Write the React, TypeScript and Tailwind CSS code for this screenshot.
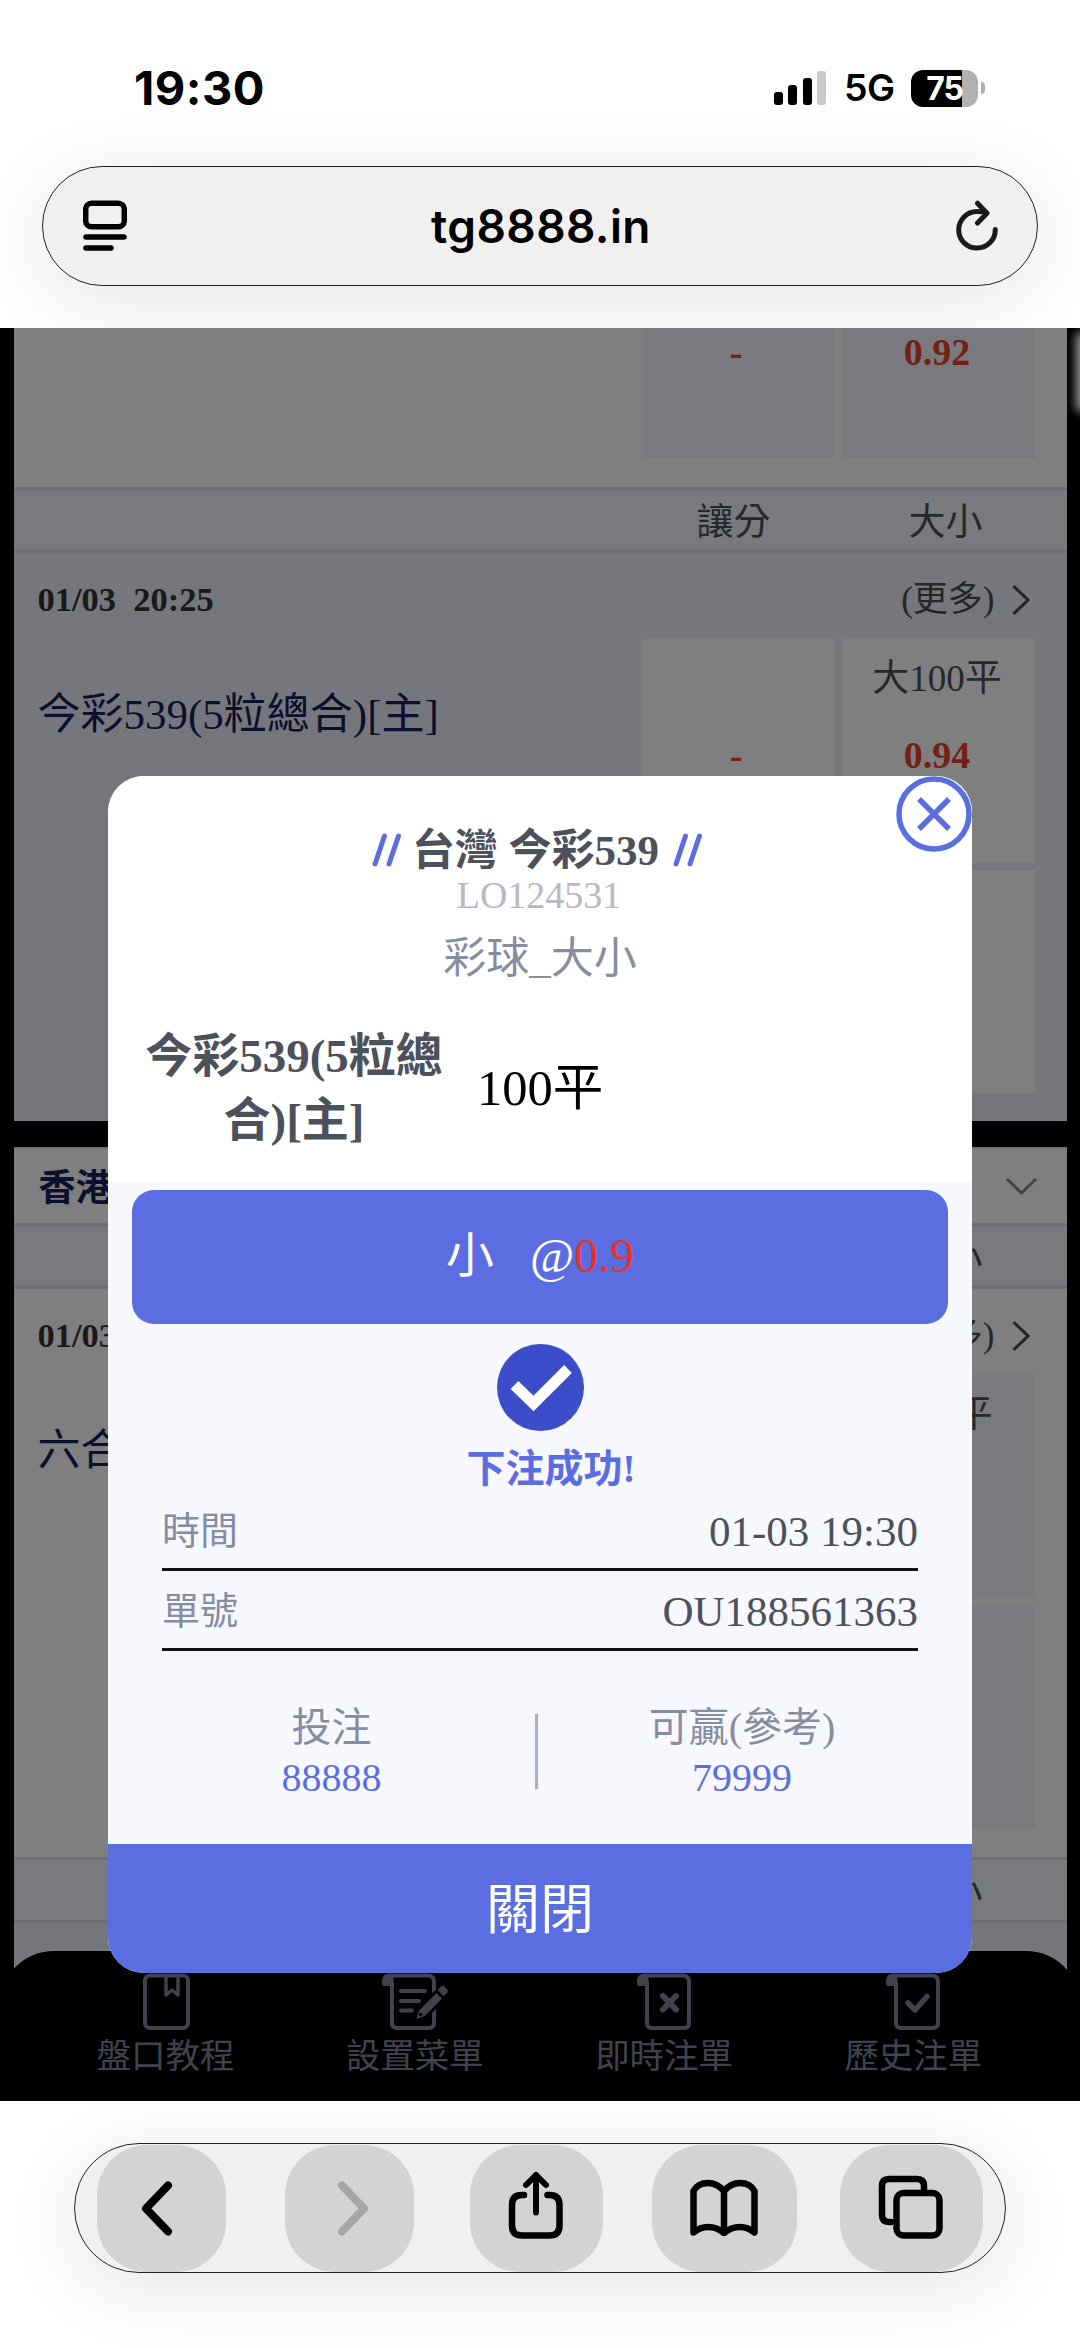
import React from "react";

const serif = "font-['Liberation_Serif','Noto_Sans_CJK_TC',serif]";
const sans = "font-['Inter','Noto_Sans_CJK_TC',sans-serif]";

const StatusBar = () => (
    <div className="flex items-center justify-between h-[118px] pt-[58px] pl-[134px] pr-[95px]">
        <span className="text-[47px] leading-[60px] font-bold tracking-[0.5px]">19:30</span>
        <div className="flex items-center">
            <div className="flex items-end gap-[5.5px] h-[34px]">
                <i className="w-[9px] h-[13px] rounded-[3px] bg-black" />
                <i className="w-[9px] h-[20px] rounded-[3px] bg-black" />
                <i className="w-[9px] h-[27px] rounded-[3px] bg-black" />
                <i className="w-[9px] h-[34px] rounded-[3px] bg-[#c9c9c9]" />
            </div>
            <span className="ml-[18px] w-[67px] text-[37.5px] leading-[44px] font-semibold tracking-[-0.5px]">5G</span>
            <div className="flex w-[67px] h-[37px] rounded-[12px] overflow-hidden bg-[linear-gradient(90deg,#000_76%,#b1b1b1_76%)]">
                <span className="w-full text-center text-[32px] leading-[38px] font-bold text-white tracking-[-1px]">75</span>
            </div>
            <i className="ml-[3px] w-[4px] h-[12px] rounded-r-full bg-[#b1b1b1]" />
        </div>
    </div>
);

const AddressBar = () => (
    <div className="mx-[42px] mt-[47.5px] flex h-[120px] items-center justify-between rounded-full border-[1.5px] border-[#222] bg-[#f0f0f0] pl-[40px] pr-[38px] shadow-[0_14px_80px_rgba(0,0,0,0.11)]">
        <svg width="44" height="52" viewBox="0 0 44 52" fill="none" stroke="#000" strokeWidth="5.5" strokeLinecap="round">
            <rect x="2.7" y="3.2" width="38.6" height="23.5" rx="6" />
            <path d="M3 37H41M3 48H28" />
        </svg>
        <span className="text-[46px] leading-[60px] font-semibold tracking-[0.4px]">tg8888.in</span>
        <svg width="44" height="52" viewBox="0 0 44 52" fill="none" stroke="#1a1a1a" strokeWidth="5" strokeLinecap="round" strokeLinejoin="round">
            <path d="M40.3 29.5A18.3 18.3 0 1 1 22 11.5q5.500 0 9.500 1.500" />
            <path d="M22.500 3.200L32 13.200L22.500 23" />
        </svg>
    </div>
);

const ColumnHeader = () => (
    <div className="flex h-[66px] border-y-[3px] border-[#dcdcec] bg-[#f2f4fd] pt-[2px] text-[37px] leading-[62px] text-[#4e5159]">
        <span className="ml-[614px] w-[212px] text-center">讓分</span>
        <span className="w-[212px] text-center">大小</span>
    </div>
);

const OddsCell = ({label, odds, tint}: CellProps) => (
    <div className={`flex h-[223.5px] flex-col items-center pt-[15px] pr-[2px] ${tint ? "bg-white" : "bg-[#f3f5fd]"}`}>
        <span className="h-[50px] text-[37px] leading-[50px] text-[#4e5159]">{label}</span>
        <span className="mt-[26px] text-[38px] leading-[50px] font-bold text-[#e6402c]">{odds}</span>
    </div>
);

const MatchRow = ({time, name, total, odds, tint}: RowProps) => (
    <div className={`flex h-[568px] justify-between pl-[24px] pr-[32px] ${tint ? "bg-[#eceef8]" : "bg-white"}`}>
        <div className="flex flex-col">
            <span className="mt-[21px] text-[34.5px] leading-[50px] font-bold whitespace-pre text-[#343436]">{time}</span>
            <span className="mt-[59px] text-[43px] leading-[64px] text-[#181e5c]">{name}</span>
        </div>
        <div className="flex w-[394px] flex-col">
            <div className="flex h-[86px] items-center justify-end gap-[17px] pr-[5px] pt-[8px] text-[35px] text-[#4c4c4e]">
                <span className="leading-[50px]">(更多)</span>
                <svg width="18" height="32" viewBox="0 0 18 32" fill="none" stroke="#4c4c4e" strokeWidth="3">
                    <path d="M1.500 2L16 16L1.500 30" />
                </svg>
            </div>
            <div className="grid grid-cols-2 gap-x-[8px] gap-y-[7px]">
                <OddsCell odds="-" tint={tint} />
                <OddsCell label={total} odds={odds} tint={tint} />
                <OddsCell tint={tint} />
                <OddsCell tint={tint} />
            </div>
        </div>
    </div>
);

const MatchList = () => (
    <div className="mx-[13.5px]">
        <div className="flex h-[159px] justify-end gap-[8px] bg-white pr-[32px] text-[38px] leading-[48px] font-bold text-[#e6402c]">
            <div className="h-[131px] w-[193px] bg-[#f3f5fd] pr-[2px] text-center">-</div>
            <div className="h-[131px] w-[193px] bg-[#f3f5fd] pr-[2px] text-center">0.92</div>
        </div>
        <ColumnHeader />
        <MatchRow time="01/03  20:25" name="今彩539(5粒總合)[主]" total="大100平" odds="0.94" tint />
        <div className="mt-[26px] flex h-[76px] items-center justify-between border-t-2 border-[#dcdcec] bg-white pl-[25px] pr-[30px] pt-[6px]">
            <span className="text-[37px] leading-[50px] font-bold text-[#181e5c]">香港 六合彩</span>
            <svg className="-mt-[5px]" width="31" height="20" viewBox="0 0 31 20" fill="none" stroke="#84868f" strokeWidth="3">
                <path d="M1 2L15.500 16L30 2" />
            </svg>
        </div>
        <ColumnHeader />
        <MatchRow time="01/03  21:15" name="六合彩[主]" total="大75平" odds="0.94" />
        <ColumnHeader />
        <div className="h-[180px] bg-[#eceef8]" />
    </div>
);

const Sheet = ({shift = 0, children}: {shift?: number; children?: React.ReactNode}) => (
    <svg width="66" height="66" viewBox={`${-shift} 0 66 66`} fill="none" stroke="#80869a" strokeWidth="4" strokeLinecap="round" strokeLinejoin="round">
        {children}
    </svg>
);

// page with a curled top left corner
const Scroll = () => (
    <>
        <path d="M10 17V56q0 5 5 5H47q5 0 5-5V15q0-6.500-6.500-6.500H8" />
        <path d="M2 17V14q0-5 5-5.500Q10 10 10 17Z" fill="#80869a" />
    </>
);

const navItems = [
    {
        label: "盤口教程",
        icon: (
            <Sheet>
                <rect x="12" y="8.5" width="43" height="52.5" rx="5" />
                <path d="M33 9V28L39 23L45 28V9" strokeWidth="3.500" />
            </Sheet>
        ),
    },
    {
        label: "設置菜單",
        icon: (
            <Sheet>
                <Scroll />
                <path d="M19 24H43M19 34H37M19 43.500H30" />
                <path d="M32 54.500L35.500 43L54.500 24L62 31.500L43.500 50.500Z" fill="#80869a" stroke="#000" strokeWidth="3" />
                <path d="M55.500 23L59 19.500Q61 18 63 20L65 22Q66.500 24 65 26L61.500 29Z" fill="#80869a" stroke="none" />
                <circle cx="38.500" cy="47.500" r="1.800" fill="#000" stroke="none" />
            </Sheet>
        ),
    },
    {
        label: "即時注單",
        icon: (
            <Sheet shift={6}>
                <Scroll />
                <path d="M26 29L39 42.500M39 29L26 42.500" strokeWidth="6" />
            </Sheet>
        ),
    },
    {
        label: "歷史注單",
        icon: (
            <Sheet shift={6}>
                <Scroll />
                <path d="M22 36L29 43L41 29.500" strokeWidth="5.500" />
            </Sheet>
        ),
    },
];

const BottomNav = () => (
    <div className="absolute inset-x-0 bottom-0 flex h-[150px] rounded-t-[54px] bg-black pl-[41px] pr-[42px] pt-[16px]">
        {navItems.map((item) => (
            <div key={item.label} className="flex flex-1 flex-col items-center">
                {item.icon}
                <span className="text-[34.500px] leading-[46px] text-[#80869a]">{item.label}</span>
            </div>
        ))}
    </div>
);

const Slashes = () => (
    <svg width="30" height="36" viewBox="0 0 30 36" stroke="#5b6ee1" strokeWidth="5" strokeLinecap="round">
        <path d="M3 31L12.500 3M17 31L26.500 3" />
    </svg>
);

const DetailRow = ({label, value}: {label: string; value: string}) => (
    <div className="flex h-[80.500px] items-start justify-between border-b-3 border-[#111] pt-[12.500px]">
        <span className="text-[38px] leading-[56px] text-[#878da1]">{label}</span>
        <span className="text-[43px] leading-[58px] text-[#4d515c]">{value}</span>
    </div>
);

const Amount = ({label, value}: {label: string; value: string}) => (
    <div className="flex flex-col items-center">
        <span className="text-[40px] leading-[54px] text-[#878da1]">{label}</span>
        <span className="text-[40px] leading-[46px] text-[#5b6ee1]">{value}</span>
    </div>
);

const BetDialog = () => (
    <div className="relative flex h-[1197px] w-[864px] flex-col overflow-hidden rounded-[36px] bg-[#f6f8fe]">
        <button className="absolute right-0 top-0">
            <svg width="76" height="76" viewBox="0 0 76 76" fill="none" stroke="#5b6ee1" strokeWidth="5.5">
                <circle cx="38" cy="38" r="35" fill="#fff" />
                <path d="M23 23L53 53M53 23L23 53" />
            </svg>
        </button>
        <div className="flex h-[406px] flex-col items-center bg-white pt-[50px]">
            <div className="flex items-center pr-[5px]">
                <Slashes />
                <span className="ml-[10px] mr-[14px] text-[43px] leading-[50px] font-bold text-[#4d515c]">台灣 今彩539</span>
                <Slashes />
            </div>
            <span className="-mt-[3px] pr-[2px] text-[38px] leading-[44px] text-[#b6b9c8]">LO124531</span>
            <span className="mt-[12px] text-[43px] leading-[60px] text-[#878da1]">彩球_大小</span>
            <div className="mt-[35px] flex w-full items-center pl-[32px]">
                <span className="w-[310px] pr-[2px] text-center text-[47px] leading-[64px] font-bold text-[#4d515c]">今彩539(5粒總合)[主]</span>
                <span className="ml-[27px] text-[50.5px] leading-[62px] text-black">100平</span>
            </div>
        </div>
        <div className="mx-[24px] mt-[8px] flex h-[134px] items-center justify-center rounded-[22px] bg-[#5b6ee1] pb-[3px] text-[48px] leading-[64px] whitespace-pre text-white">
            小{"   "}@<span className="text-[#e5342c]">0.9</span>
        </div>
        <svg className="mx-auto mt-[20px]" width="87" height="87" viewBox="0 0 87 87">
            <circle cx="43.500" cy="43.500" r="43.500" fill="#3b4dc8" />
            <path d="M17.500 41L36.500 59.500L71 25" fill="none" stroke="#fff" strokeWidth="11" />
        </svg>
        <span className="pl-[22px] mt-[10px] text-center text-[39px] leading-[56px] font-bold text-[#5b6ee1]">下注成功!</span>
        <div className="mx-[54px] -mt-[7px]">
            <DetailRow label="時間" value="01-03 19:30" />
            <DetailRow label="單號" value="OU188561363" />
        </div>
        <div className="mt-[50px] grid grid-cols-[447px_2px_1fr] items-center pr-[45px]">
            <Amount label="投注" value="88888" />
            <i className="-ml-[20px] h-[75px] w-[2.500px] bg-[#a7acd2]" />
            <Amount label="可贏(參考)" value="79999" />
        </div>
        <button className="mt-auto h-[129.500px] w-full bg-[#5b6ee1] pt-[5px] text-[54px] leading-[124px] text-white">關閉</button>
    </div>
);

const ToolButton = ({className, children}: {className: string; children: React.ReactNode}) => (
    <button className={`flex h-[127px] items-center justify-center rounded-[50px] bg-[#d3d3d3] ${className}`}>
        <svg width="76" height="76" viewBox="0 0 76 76" fill="none" stroke="currentColor" strokeWidth="6.5" strokeLinecap="round" strokeLinejoin="round">
            {children}
        </svg>
    </button>
);

const Toolbar = () => (
    <div className="mx-[74px] mt-[42px] flex h-[130px] items-center rounded-full border-[1.5px] border-[#222] bg-[#f0f0f0] pl-[21.500px] shadow-[0_14px_80px_rgba(0,0,0,0.11)]">
        <ToolButton className="w-[129px]">
            <path d="M45 15.500L23 38.500L45 61.500" strokeWidth="8" />
        </ToolButton>
        <ToolButton className="ml-[59px] w-[129px] text-[#a6a6a8]">
            <path d="M31 15.500L53 38.500L31 61.500" strokeWidth="8" />
        </ToolButton>
        <ToolButton className="ml-[56px] w-[133px]">
            <path d="M26 25H24Q14 25 14 35V55.500Q14 65.500 24 65.500H51.500Q61.500 65.500 61.500 55.500V35Q61.500 25 51.500 25H49.500" />
            <path d="M38 42.500V5M28 15L38 5L48 15" strokeWidth="6" />
        </ToolButton>
        <ToolButton className="ml-[49px] w-[145px]">
            <path d="M38 21Q31 13 22 13Q12 13 7.500 21V62.500Q14 57 22 57Q31 57 38 63Q45 57 54 57Q62 57 68.500 62.500V21Q64 13 54 13Q45 13 38 21V63" />
        </ToolButton>
        <ToolButton className="ml-[43px] w-[143px]">
            <rect x="23.500" y="23" width="43" height="42.500" rx="7" />
            <path d="M18 52H16Q9 52 9 45V16Q9 9 16 9H44Q51 9 51 16V19" />
        </ToolButton>
    </div>
);

const App = () => {
    return (
        <div className={`flex h-[2348px] w-[1080px] flex-col overflow-hidden bg-white text-black ${sans}`}>
            <header className="h-[328px]">
                <StatusBar />
                <AddressBar />
            </header>
            <main className={`relative h-[1773px] overflow-hidden bg-black ${serif}`}>
                <MatchList />
                <BottomNav />
                <div className="absolute inset-0 flex items-start justify-center bg-black/50 pt-[448px]">
                    <BetDialog />
                </div>
                <div className="absolute -right-[8px] top-[4px] h-[80px] w-[12px] rounded-full bg-white/60 blur-[5px]" />
            </main>
            <footer className="flex-1">
                <Toolbar />
            </footer>
        </div>
    );
};

export default App;

//types
type CellProps = {
    label?: string
    odds?: string
    tint?: boolean
}

type RowProps = {
    time: string
    name: string
    total: string
    odds: string
    tint?: boolean
}
